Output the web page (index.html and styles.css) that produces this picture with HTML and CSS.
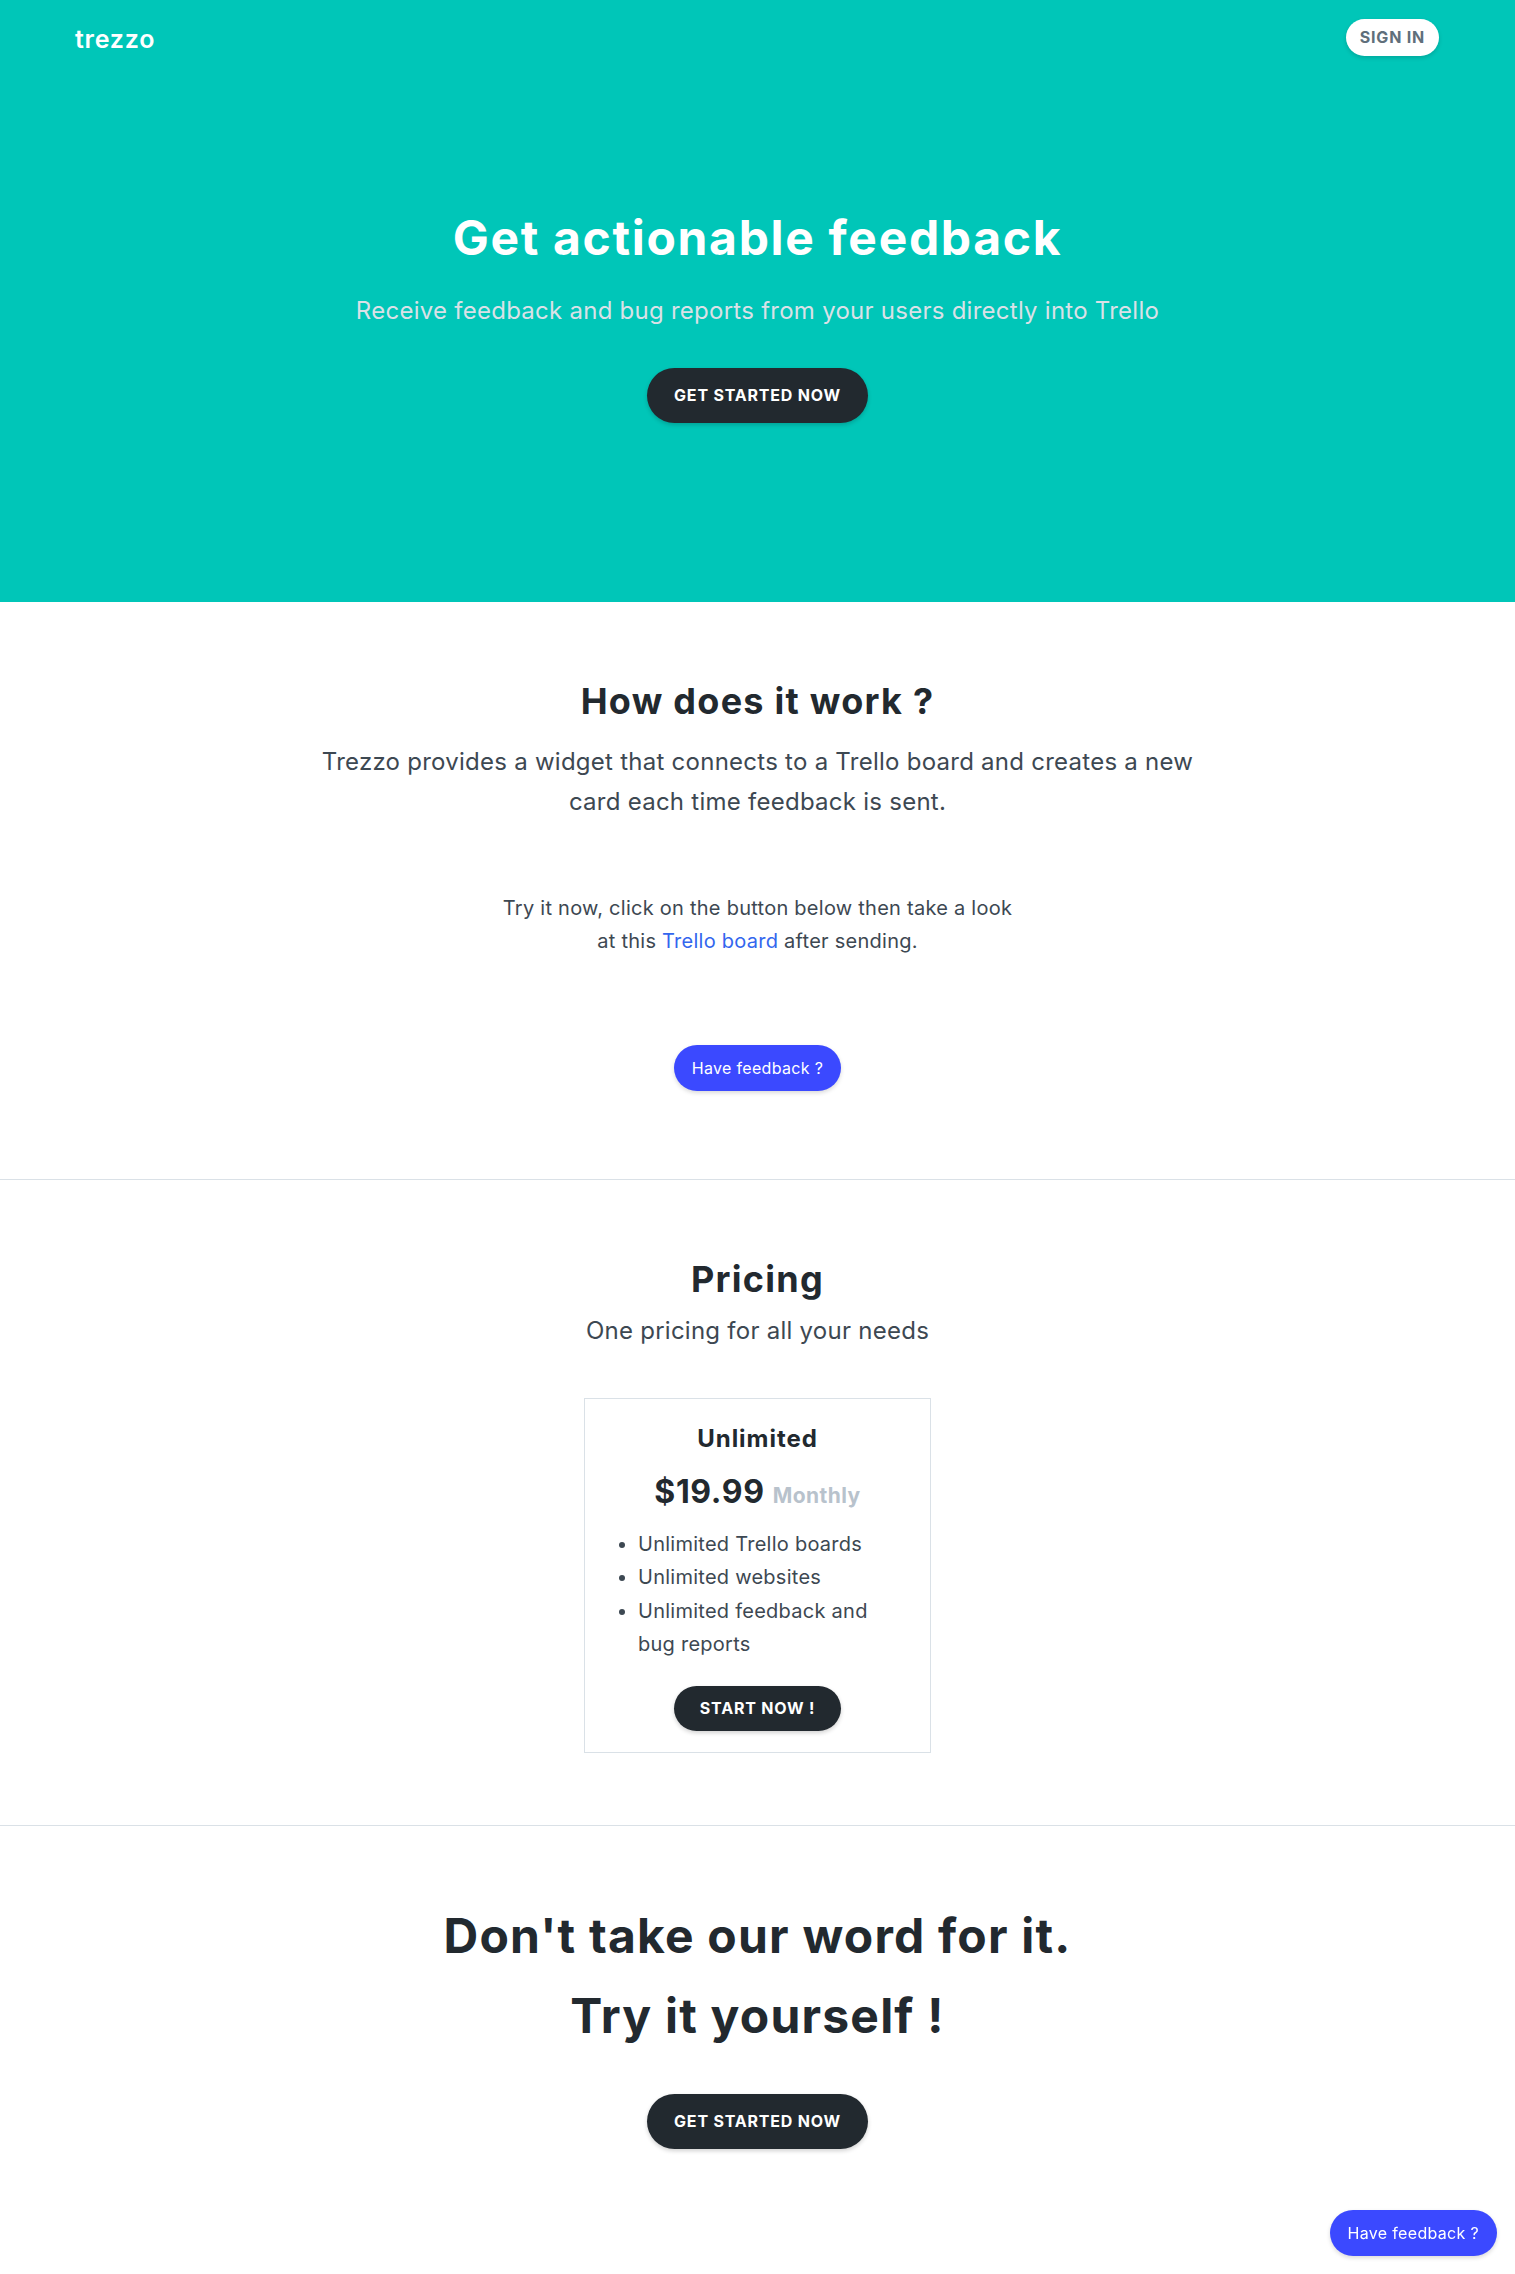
FILE: index.html
```html
<!DOCTYPE html>
<html lang="en">
<head>
<meta charset="utf-8">
<title>Trezzo - Get actionable feedback</title>
<link rel="stylesheet" href="styles.css">
</head>
<body>
<header class="hero">
  <nav class="nav">
    <a class="logo" href="#">trezzo</a>
    <a class="btn-signin" href="#">Sign in</a>
  </nav>
  <div class="hero-body">
    <h1 class="hero-title">Get actionable feedback</h1>
    <p class="hero-sub">Receive feedback and bug reports from your users directly into Trello</p>
    <a class="btn btn-dark" href="#">Get started now</a>
  </div>
</header>

<section class="section how">
  <h2 class="section-title">How does it work ?</h2>
  <p class="lead">Trezzo provides a widget that connects to a Trello board and creates a new card each time feedback is sent.</p>
  <p class="try">Try it now, click on the button below then take a look at this <a class="link" href="#">Trello board</a> after sending.</p>
  <a class="btn-feedback" href="#">Have feedback ?</a>
</section>

<hr class="divider">

<section class="section pricing">
  <h2 class="section-title">Pricing</h2>
  <p class="pricing-sub">One pricing for all your needs</p>
  <div class="card">
    <h3 class="card-title">Unlimited</h3>
    <div class="price">$19.99 <span class="period">Monthly</span></div>
    <ul class="features">
      <li>Unlimited Trello boards</li>
      <li>Unlimited websites</li>
      <li>Unlimited feedback and bug reports</li>
    </ul>
    <a class="btn btn-dark btn-small" href="#">Start now !</a>
  </div>
</section>

<hr class="divider">

<section class="section cta">
  <h2 class="cta-title"><span class="cta-line">Don't take our word for it.</span><span class="cta-line">Try it yourself !</span></h2>
  <a class="btn btn-dark" href="#">Get started now</a>
</section>

<a class="btn-feedback floating" href="#">Have feedback ?</a>
</body>
</html>
```

FILE: styles.css
```css
* { box-sizing: border-box; }

body {
  margin: 0;
  font-family: Inter, "Noto Sans", "Liberation Sans", sans-serif;
  color: #22292f;
  background: #ffffff;
  letter-spacing: 0.016em;
}

a { text-decoration: none; }

.hero {
  background: #00c6b8;
}

.nav {
  display: flex;
  justify-content: space-between;
  align-items: center;
  padding: 19px 76px 0 75px;
}

.logo {
  margin-top: 4px;
  color: #ffffff;
  font-size: 25px;
  font-weight: 600;
  line-height: 33px;
  letter-spacing: 0.03em;
}

.btn-signin {
  display: inline-block;
  background: #ffffff;
  color: #606f7b;
  font-size: 16px;
  font-weight: 700;
  text-transform: uppercase;
  letter-spacing: 0.05em;
  line-height: 37px;
  height: 37px;
  padding: 0 14px;
  border-radius: 9999px;
  box-shadow: 0 2px 4px rgba(0, 0, 0, 0.15);
}

.hero-body {
  text-align: center;
  padding: 153px 0 179px;
}

.hero-title {
  margin: 0;
  color: #ffffff;
  font-size: 48px;
  font-weight: 700;
  line-height: 1.2;
  letter-spacing: 0.035em;
}

.hero-sub {
  margin: 24px 0 37px;
  color: #dae1e7;
  font-size: 24px;
  line-height: 1.7;
}

.btn {
  display: inline-block;
  font-size: 16px;
  font-weight: 700;
  text-transform: uppercase;
  letter-spacing: 0.05em;
  line-height: 27px;
  border-radius: 9999px;
}

.btn-dark {
  background: #22292f;
  color: #ffffff;
  padding: 14px 27px;
  box-shadow: 0 2px 4px rgba(0, 0, 0, 0.18);
}

.btn-small {
  padding: 9px 26px;
}

.section {
  text-align: center;
}

.how {
  padding: 78px 0 88px;
}

.pricing {
  padding: 78px 0 72px;
}

.cta {
  padding: 70px 0 100px;
}

.section-title {
  margin: 0;
  font-size: 36px;
  font-weight: 700;
  line-height: 1.2;
  letter-spacing: 0.035em;
}

.lead {
  max-width: 900px;
  margin: 18px auto 0;
  color: #3d4852;
  font-size: 24px;
  line-height: 40.5px;
}

.try {
  max-width: 522px;
  margin: 69px auto 0;
  color: #3d4852;
  font-size: 20px;
  line-height: 33px;
}

.link {
  color: #3366ee;
}

.btn-feedback {
  display: inline-block;
  background: #3b49ff;
  color: #ffffff;
  font-size: 16px;
  font-weight: 400;
  letter-spacing: 0.02em;
  line-height: 26px;
  padding: 10px 18px;
  border-radius: 9999px;
  box-shadow: 0 2px 4px rgba(0, 0, 0, 0.15);
}

.how .btn-feedback {
  margin-top: 87px;
}

.floating {
  position: fixed;
  right: 18px;
  bottom: 18px;
}

.divider {
  margin: 0;
  border: 0;
  border-top: 1px solid #dae1e7;
}

.pricing-sub {
  margin: 10px 0 0;
  color: #3d4852;
  font-size: 24px;
  line-height: 40px;
}

.card {
  width: 347px;
  margin: 47px auto 0;
  padding: 22px 32px 21px;
  border: 1px solid #dae1e7;
}

.card-title {
  margin: 0;
  font-size: 24px;
  font-weight: 700;
  line-height: 36px;
  letter-spacing: 0.04em;
}

.price {
  margin-top: 16px;
  font-size: 32px;
  font-weight: 700;
  line-height: 38px;
  letter-spacing: 0.02em;
}

.period {
  color: #b8c2cc;
  font-size: 21px;
  letter-spacing: 0.02em;
}

.features {
  margin: 13px 0 0;
  padding-left: 21px;
  text-align: left;
  color: #3d4852;
  font-size: 20px;
  line-height: 33.5px;
}

.card .btn {
  margin-top: 24px;
}

.cta-title {
  margin: 0;
  font-size: 48px;
  font-weight: 700;
  line-height: 80px;
  letter-spacing: 0.025em;
}

.cta-line {
  display: block;
}

.cta .btn {
  margin-top: 38px;
}
```
